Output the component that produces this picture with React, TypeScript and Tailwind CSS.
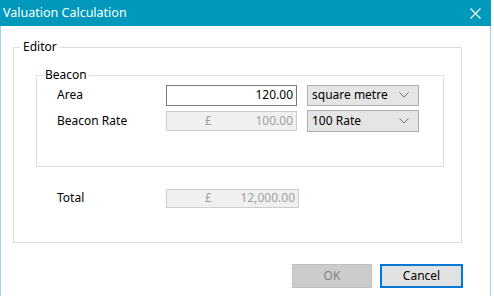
import React from "react";

const font = { fontFamily: '"Noto Sans", "Open Sans", sans-serif' };

function Chevron() {
  return (
    <svg width="10" height="6" viewBox="0 0 10 6" className="shrink-0">
      <path d="M0.5 0.5 L5 5 L9.5 0.5" fill="none" stroke="#606060" strokeWidth="0.9" />
    </svg>
  );
}

function Combo({ label, h }: { label: string; h: string }) {
  return (
    <div className={`flex w-[112px] ${h} items-center justify-between border border-[#adadad] bg-[#e5e5e5] pl-[4px] pr-[9px] text-[12px] text-black`}>
      <span className="leading-none">{label}</span>
      <Chevron />
    </div>
  );
}

export default function App() {
  return (
    <div className="relative h-[296px] w-[494px] overflow-hidden bg-white text-[12px] text-black" style={font}>
      <div className="flex h-[296px] w-[491px] flex-col border-x border-[#9fd6e6] bg-white">
        <div className="-mx-px flex h-[26px] shrink-0 items-center justify-between bg-[#0099bc] pl-[3px] pr-[10px]">
          <span className="text-[12.5px] leading-none text-white">Valuation Calculation</span>
          <svg width="11" height="11" viewBox="0 0 11 11">
            <path d="M0.5 0.5 L10.5 10.5 M10.5 0.5 L0.5 10.5" stroke="white" strokeWidth="1.1" />
          </svg>
        </div>
        <div className="flex flex-col pl-[12px] pt-[13px]">
          <fieldset className="m-0 h-[204px] w-[449px] border border-[#dcdcdc] p-0">
            <legend className="ml-[6px] px-[3px] text-[12px] leading-[16px]">Editor</legend>
            <fieldset className="m-0 ml-[22px] mt-[12px] h-[100px] w-[408px] border border-[#dcdcdc] p-0">
              <legend className="ml-[6px] px-[2px] text-[12px] leading-[16px]">Beacon</legend>
              <div className="flex flex-col pl-[20px] pt-[1px]">
                <div className="flex h-[22px] items-center">
                  <span className="w-[109px]">Area</span>
                  <div className="flex h-[21px] w-[131px] items-center justify-end border border-[#7a7a7a] bg-white pr-[3px]">
                    120.00
                  </div>
                  <div className="ml-[10px]">
                    <Combo label="square metre" h="h-[21px]" />
                  </div>
                </div>
                <div className="mt-[4px] flex h-[22px] items-center">
                  <span className="w-[109px]">Beacon Rate</span>
                  <div className="flex h-[20px] w-[131px] items-center justify-between border border-[#cccccc] bg-[#f0f0f0] pl-[38px] pr-[3px] text-[#a0a0a0]">
                    <span>£</span>
                    <span>100.00</span>
                  </div>
                  <div className="ml-[10px]">
                    <Combo label="100 Rate" h="h-[22px]" />
                  </div>
                </div>
              </div>
            </fieldset>
            <div className="mt-[21px] flex h-[20px] items-center pl-[43px]">
              <span className="w-[109px]">Total</span>
              <div className="flex h-[19px] w-[133px] items-center justify-between border border-[#cccccc] bg-[#f0f0f0] pl-[38px] pr-[3px] text-[#a0a0a0]">
                <span>£</span>
                <span>12,000.00</span>
              </div>
            </div>
          </fieldset>
          <div className="mt-[21px] flex w-[450px] justify-end gap-[8px]">
            <div className="flex h-[24px] w-[80px] items-center justify-center border border-[#bfbfbf] bg-[#cccccc] text-[#838383]">
              OK
            </div>
            <div className="flex h-[24px] w-[83px] items-center justify-center border-2 border-[#0078d7] bg-[#e1e1e1]">
              Cancel
            </div>
          </div>
        </div>
      </div>
    </div>
  );
}
